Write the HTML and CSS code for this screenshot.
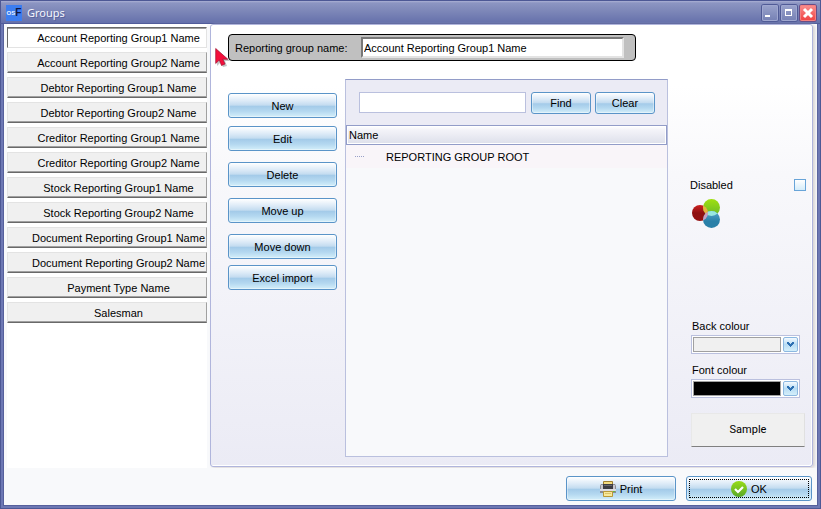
FILE: index.html
```html
<!DOCTYPE html>
<html lang="en">
<head>
<meta charset="utf-8">
<title>Groups</title>
<link rel="stylesheet" href="styles.css">
</head>
<body>
<div class="window">
  <header class="titlebar">
    <span class="logo"><span>OS</span><b>F</b></span>
    <h1>Groups</h1>
    <div class="controls">
      <button type="button" aria-label="Minimize"><svg viewBox="0 0 16 16"><path d="M3 10h5v2H3z"/></svg></button>
      <button type="button" aria-label="Maximize"><svg viewBox="0 0 16 16"><path d="M4 4h7v7H4zM5 6v4h5V6z" fill-rule="evenodd"/></svg></button>
      <button type="button" class="close" aria-label="Close"><svg viewBox="0 0 16 16"><path d="M4 4l8 8M12 4l-8 8" stroke="#fff" stroke-width="3"/></svg></button>
    </div>
  </header>
  <main class="content">
    <nav class="tabs">
      <button type="button" class="tab wide active">Account Reporting Group1 Name</button>
      <button type="button" class="tab wide">Account Reporting Group2 Name</button>
      <button type="button" class="tab wide">Debtor Reporting Group1 Name</button>
      <button type="button" class="tab wide">Debtor Reporting Group2 Name</button>
      <button type="button" class="tab wide">Creditor Reporting Group1 Name</button>
      <button type="button" class="tab wide">Creditor Reporting Group2 Name</button>
      <button type="button" class="tab wide">Stock Reporting Group1 Name</button>
      <button type="button" class="tab wide">Stock Reporting Group2 Name</button>
      <button type="button" class="tab wide">Document Reporting Group1 Name</button>
      <button type="button" class="tab wide">Document Reporting Group2 Name</button>
      <button type="button" class="tab wide">Payment Type Name</button>
      <button type="button" class="tab wide">Salesman</button>
    </nav>
    <section class="panel">
      <div class="group-name">
        <label for="group-name">Reporting group name:</label>
        <input id="group-name" type="text" value="Account Reporting Group1 Name">
      </div>
      <div class="columns">
        <div class="actions">
          <button type="button" class="btn">New</button>
          <button type="button" class="btn">Edit</button>
          <button type="button" class="btn spaced">Delete</button>
          <button type="button" class="btn spaced">Move up</button>
          <button type="button" class="btn spaced">Move down</button>
          <button type="button" class="btn">Excel import</button>
        </div>
        <div class="tree">
          <div class="search">
            <input type="text" aria-label="Find">
            <button type="button" class="btn small">Find</button>
            <button type="button" class="btn small">Clear</button>
          </div>
          <table>
            <thead><tr><th scope="col">Name</th></tr></thead>
            <tbody><tr><td><span class="twig"></span>REPORTING GROUP ROOT</td></tr></tbody>
          </table>
        </div>
        <div class="options">
          <div class="disabled">
            <label for="disabled">Disabled</label>
            <input id="disabled" type="checkbox">
          </div>
          <svg class="circles" viewBox="0 0 30 30">
            <defs>
              <linearGradient id="red" x2="0" y2="1"><stop stop-color="#cc2020"/><stop offset=".5" stop-color="#8e1010"/><stop offset="1" stop-color="#941010"/></linearGradient>
              <linearGradient id="green" x2="0" y2="1"><stop stop-color="#a0e010"/><stop offset="1" stop-color="#68b828"/></linearGradient>
              <linearGradient id="blue" x2="0" y2="1"><stop stop-color="#58a8cc"/><stop offset=".6" stop-color="#2a80a8"/><stop offset="1" stop-color="#2a80a8"/></linearGradient>
              <clipPath id="in-blue"><circle cx="19.500" cy="20.500" r="8.500"/></clipPath>
              <clipPath id="in-red"><circle cx="8" cy="14" r="8"/></clipPath>
            </defs>
            <circle cx="8" cy="14" r="8" fill="url(#red)"/>
            <circle cx="19.500" cy="8.500" r="8.500" fill="url(#green)"/>
            <circle cx="19.500" cy="20.500" r="8.500" fill="url(#blue)"/>
            <circle cx="19.500" cy="8.500" r="8.500" fill="#98e8e0" clip-path="url(#in-blue)"/>
            <g clip-path="url(#in-red)"><circle cx="19.500" cy="8.500" r="8.500" fill="#e8b040"/><circle cx="19.500" cy="20.500" r="8.500" fill="#c8a0c0"/></g>
          </svg>
          <div class="field">
            <label for="back">Back colour</label>
            <div class="combo">
              <select id="back" class="back"><option></option></select>
              <span class="arrow"><svg viewBox="0 0 13 13"><path d="M3 4h2v1h1v1h1V5h1V4h2v2H9v1H8v1H7v1H6V8H5V7H4V6H3z" fill="#2d70b2"/></svg></span>
            </div>
          </div>
          <div class="field">
            <label for="font">Font colour</label>
            <div class="combo">
              <select id="font" class="font"><option></option></select>
              <span class="arrow"><svg viewBox="0 0 13 13"><path d="M3 4h2v1h1v1h1V5h1V4h2v2H9v1H8v1H7v1H6V8H5V7H4V6H3z" fill="#2d70b2"/></svg></span>
            </div>
          </div>
          <div class="sample">Sample</div>
        </div>
      </div>
    </section>
  </main>
  <footer class="footer">
    <button type="button" class="btn print">
      <svg viewBox="0 0 16 16">
        <path d="M3.500.5h9v4h-9z" fill="#f4dc80" stroke="#a08030"/>
        <path d="M1 3h14l1 2v7H0V5z" fill="#8c8c94"/>
        <path d="M1 4h2v4H1zM13 4h2v4h-2z" fill="#c8c8d0"/>
        <path d="M3 3h10v5H3z" fill="#3c3c42"/>
        <path d="M4 4h8v1H4z" fill="#686870"/>
        <path d="M0 8h16v2H0z" fill="#dcdce2"/>
        <path d="M13 10h2v1h-2z" fill="#60c040"/>
        <path d="M3.500 10.500h9v5h-9z" fill="#f8e898" stroke="#b89838"/>
        <path d="M5 12h6v1H5z" fill="#dcc468"/>
      </svg>Print</button>
    <button type="button" class="btn ok">
      <svg viewBox="0 0 16 16">
        <defs><linearGradient id="tick" x2="0" y2="1"><stop stop-color="#98dc18"/><stop offset="1" stop-color="#58a828"/></linearGradient></defs>
        <circle cx="8" cy="8" r="8" fill="url(#tick)"/>
        <path d="M4 8l3 3 5-5" fill="none" stroke="#fff" stroke-width="2.200"/>
      </svg>OK</button>
  </footer>
  <svg class="cursor" viewBox="0 0 15 20"><path d="M2 3v16l4-4 2 5 4-1-2-5h5z" fill="#888" opacity=".5"/><path d="M.7 1.500v15l3.600-3.500 2.200 5.500 3.500-1.500-2.200-4.800h5z" fill="#f4103c" stroke="#a01030" stroke-width=".7"/></svg>
</div>
</body>
</html>
```

FILE: styles.css
```css
* { box-sizing: border-box; }
body { margin: 0; color: #000; font: 11px/16px "Liberation Sans", Arial, sans-serif; }
button, input, select { margin: 0; padding: 0; color: inherit; font: inherit; }
svg { display: block; }

.window {
  position: relative;
  display: flex;
  flex-direction: column;
  min-height: 100vh;
  padding: 0 4px 4px;
  background: #6570ab;
  box-shadow: inset 0 0 0 1px #4d5895, inset 0 0 0 3px #6d78b4, inset 0 0 0 4px #56609c;
}
.titlebar {
  display: flex;
  align-items: center;
  height: 24px;
  margin: 0 -4px;
  padding: 1px 5px 0 6px;
  border-top: 1px solid #4d5895;
  border-bottom: 1px solid #515c9a;
  background: linear-gradient(#aab0d4, #8c95c2 2px, #7d87b8 10px, #6570ab);
  box-shadow: inset 1px 0 #4d5895, inset -1px 0 #4d5895;
}
.logo {
  display: flex;
  align-items: center;
  justify-content: center;
  width: 16px;
  height: 16px;
  background: #3c7df0;
  color: #e8f0ff;
  font: bold 6px/16px "Liberation Sans", sans-serif;
}
.logo b { color: #101840; font-size: 10px; }
h1 {
  flex: 1;
  margin: 0 0 0 5px;
  color: #f4f5fc;
  font: 11px/16px "Noto Sans", sans-serif;
  text-shadow: 1px 1px #59639d;
}
.controls { display: flex; gap: 3px; }
.controls button {
  width: 16px;
  height: 16px;
  border: 0;
  border-radius: 2px;
  background: linear-gradient(#9aa3cc, #7580b4);
  box-shadow: 0 0 0 1px #505b96, inset 0 0 0 1px #9fa7d0;
}
.controls svg { width: 16px; height: 16px; fill: #fff; }
.controls .close { background: linear-gradient(#f89090, #f04040); box-shadow: 0 0 0 1px #6a4c84, inset 0 0 0 1px #f48080; }

.content { display: flex; flex: 1; gap: 3px; padding: 0 4px 0 3px; background: #f8f9fb; }
.tabs {
  display: flex;
  flex-direction: column;
  gap: 4px;
  width: 200px;
  padding-top: 3px;
  background: #fff;
}
.tab {
  height: 21px;
  border: 1px solid;
  border-color: #e3e3e3 #a0a0a0 #696969 #e3e3e3;
  background: #f0f0f0;
  box-shadow: inset 0 -1px #a0a0a0;
  text-align: center;
  white-space: nowrap;
}
.wide { padding-left: 23px; }
.active {
  border-color: #696969 #e3e3e3 #e3e3e3 #696969;
  background: #fff;
  box-shadow: inset 0 1px #a0a0a0;
}

.panel {
  display: flex;
  flex: 1;
  flex-direction: column;
  min-width: 0;
  margin-bottom: 1px;
  padding: 9px 6px 9px 17px;
  border: 1px solid #b0b5dc;
  border-radius: 3px;
  background: linear-gradient(#fff 60px, #f8f8fb 150px, #ebebf5);
  box-shadow: inset -1px -1px #fff, 2px 1px 3px #d8d4d4;
}
.group-name {
  display: flex;
  align-items: center;
  width: 408px;
  height: 27px;
  padding-left: 6px;
  border: 1px solid #000;
  border-radius: 4px;
  background: #c0c0c0;
}
.group-name label { width: 126px; }
.group-name input {
  flex: 1;
  min-width: 0;
  height: 21px;
  margin-right: 11px;
  padding: 0 1px;
  border: 2px solid;
  border-color: #787878 #e3e3e3 #e3e3e3 #787878;
  background: #fff;
}
.columns { display: flex; flex: 1; margin-top: 18px; }
.actions { display: flex; flex-direction: column; gap: 6px; width: 109px; padding-top: 14px; }
.actions .btn + .btn { margin-top: 2px; }
.actions .btn.spaced { margin-top: 5px; }
.actions .btn:last-child { margin-top: 0; }
.btn {
  height: 25px;
  border: 1px solid #5a94c8;
  border-radius: 3px;
  background: linear-gradient(#fff, #dceaf7 30%, #c4dcf0 48%, #a4cbe9 54%, #b4d8f0 75%, #d4effa);
  box-shadow: inset 0 0 0 1px rgba(255, 255, 255, .4);
}
.small { width: 60px; height: 22px; }
.tree {
  display: flex;
  flex: 1;
  flex-direction: column;
  min-width: 0;
  margin-left: 8px;
  border: 1px solid #bac0de;
  border-top-color: #929cc8;
  background: #f8f9fb;
}
.search { display: flex; align-items: center; gap: 4px; height: 45px; padding: 0 12px 0 13px; background: #ebebf5; }
.search input {
  flex: 1;
  min-width: 0;
  height: 21px;
  margin-right: 1px;
  border: 1px solid #bac0de;
  background: #fff;
}
table { width: 100%; border-collapse: separate; border-spacing: 0; }
th {
  height: 20px;
  padding: 0 2px;
  border: 1px solid #929cc8;
  background: linear-gradient(#fff, #f4f4f9 20%, #dddfea);
  box-shadow: inset 0 0 0 1px #fff;
  font-weight: normal;
  text-align: left;
}
td { height: 23px; padding: 0 9px; background: #f9f5f9; }
.twig { display: inline-block; width: 9px; margin-right: 22px; border-top: 1px dotted #98a0c8; vertical-align: 4px; }

.options { display: flex; flex-direction: column; width: 116px; margin-left: 22px; padding-top: 98px; }
.disabled { display: flex; align-items: center; justify-content: space-between; }
.disabled input {
  appearance: none;
  width: 12px;
  height: 12px;
  border: 1px solid #68a4d8;
  background: linear-gradient(#fff, #d4ecfa);
}
.circles { width: 30px; height: 30px; margin: 6px 0 89px 2px; }
.field { width: 109px; margin: 0 0 8px 1px; }
.field label { display: block; padding-left: 1px; }
.combo { display: flex; gap: 2px; height: 19px; margin-top: 1px; padding: 1px; border: 1px solid #bac0de; background: #fff; }
.combo select { appearance: none; flex: 1; min-width: 0; border: 1px solid #a0a0a0; border-radius: 0; background: #f0f0f0; }
.combo .font { background: #000; }
.arrow { width: 15px; border: 1px solid #8cb8e0; border-radius: 2px; background: linear-gradient(#f4faff, #b8dcf4 50%, #d4effa); }
.arrow svg { width: 13px; height: 13px; }
.sample {
  height: 34px;
  margin: 7px 1px 0;
  border: 1px solid;
  border-color: #e8e8e8 #e0e0e0 #808080 #e8e8e8;
  background: #f0f0f0;
  font: 11px/32px Roboto, sans-serif;
  text-align: center;
}

.footer { display: flex; justify-content: flex-end; gap: 10px; padding: 8px 5px 4px; background: #f8f9fb; }
.footer .btn { display: flex; align-items: center; justify-content: center; gap: 4px; width: 110px; }
.footer svg { width: 16px; height: 16px; }
.footer .ok { width: 126px; outline: 1px dotted #000; outline-offset: -4px; }
.cursor { position: absolute; top: 47px; left: 215px; width: 15px; height: 20px; }
```
